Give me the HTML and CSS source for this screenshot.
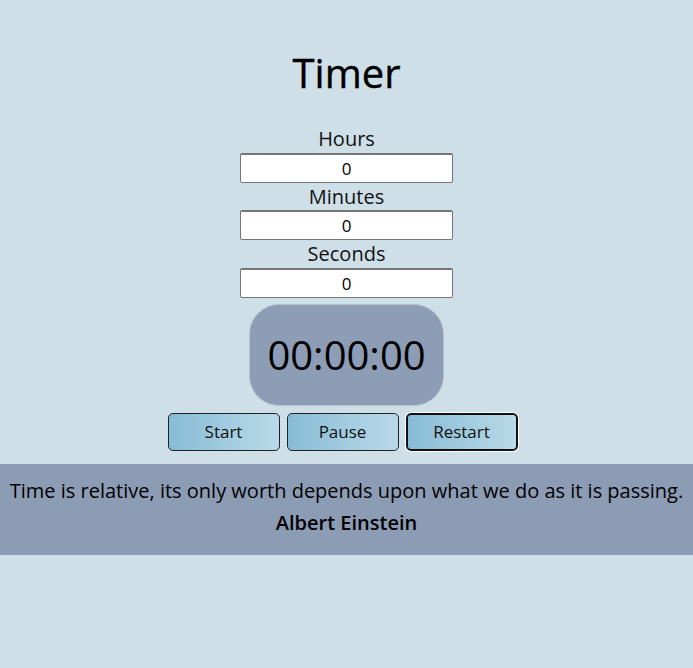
FILE: index.html
```html
<!DOCTYPE html>
<html>
<head>
<meta charset="utf-8">
<link rel="stylesheet" href="styles.css">
</head>
<body>
<main class="app">
  <h1 class="title">Timer</h1>
  <div class="fields">
    <label class="label">Hours</label>
    <input class="field" type="text" value="0">
    <label class="label">Minutes</label>
    <input class="field" type="text" value="0">
    <label class="label">Seconds</label>
    <input class="field" type="text" value="0">
  </div>
  <div class="display">00:00:00</div>
  <div class="buttons">
    <button class="btn">Start</button>
    <button class="btn">Pause</button>
    <button class="btn btn-focus">Restart</button>
  </div>
  <section class="quote">
    <p class="quote-text">Time is relative, its only worth depends upon what we do as it is passing.</p>
    <p class="quote-author">Albert Einstein</p>
  </section>
</main>
</body>
</html>
```
FILE: styles.css
```css
html, body {
  margin: 0;
  padding: 0;
}
body {
  background: #cfdfe7;
  font-family: "Open Sans", "Noto Sans", sans-serif;
  color: #000;
}
.app {
  display: flex;
  flex-direction: column;
  align-items: center;
  padding-top: 48px;
}
.title {
  margin: 0;
  font-size: 40px;
  font-weight: 500;
  line-height: 50px;
  -webkit-text-stroke: 0.4px #000;
}
.fields {
  display: flex;
  flex-direction: column;
  align-items: center;
  margin-top: 27px;
}
.label {
  font-size: 20px;
  line-height: 27.5px;
  color: #111;
}
.field {
  width: 213px;
  height: 30px;
  box-sizing: border-box;
  border: 1px solid #767676;
  border-top-width: 2px;
  border-radius: 2px;
  background: #fff;
  text-align: center;
  font-family: "Open Sans", "Noto Sans", sans-serif;
  font-size: 17px;
  padding: 0;
}
.display {
  margin-top: 6px;
  width: 195px;
  height: 102px;
  box-sizing: border-box;
  border: 1px solid #b8c2cc;
  border-radius: 30px;
  background: #8d9db5;
  display: flex;
  align-items: center;
  justify-content: center;
  font-size: 40px;
}
.buttons {
  display: flex;
  gap: 7px;
  margin-top: 7px;
  padding-right: 8px;
}
.btn {
  width: 112px;
  height: 38px;
  box-sizing: border-box;
  border: 1px solid #222;
  border-radius: 5px;
  background: linear-gradient(to right, #87bcd6, #b9d9e8);
  font-family: "Open Sans", "Noto Sans", sans-serif;
  font-size: 17px;
  color: #111;
}
.btn-focus {
  border: 2px solid #111;
  outline: 1px solid #fff;
}
.quote {
  align-self: stretch;
  margin-top: 13px;
  background: #8d9cb5;
  height: 91px;
  box-sizing: border-box;
  padding-top: 13px;
  text-align: center;
}
.quote-text {
  margin: 0;
  font-size: 20px;
  line-height: 27px;
}
.quote-author {
  margin: 5px 0 0;
  font-size: 20px;
  font-weight: 600;
  line-height: 27px;
}
```
